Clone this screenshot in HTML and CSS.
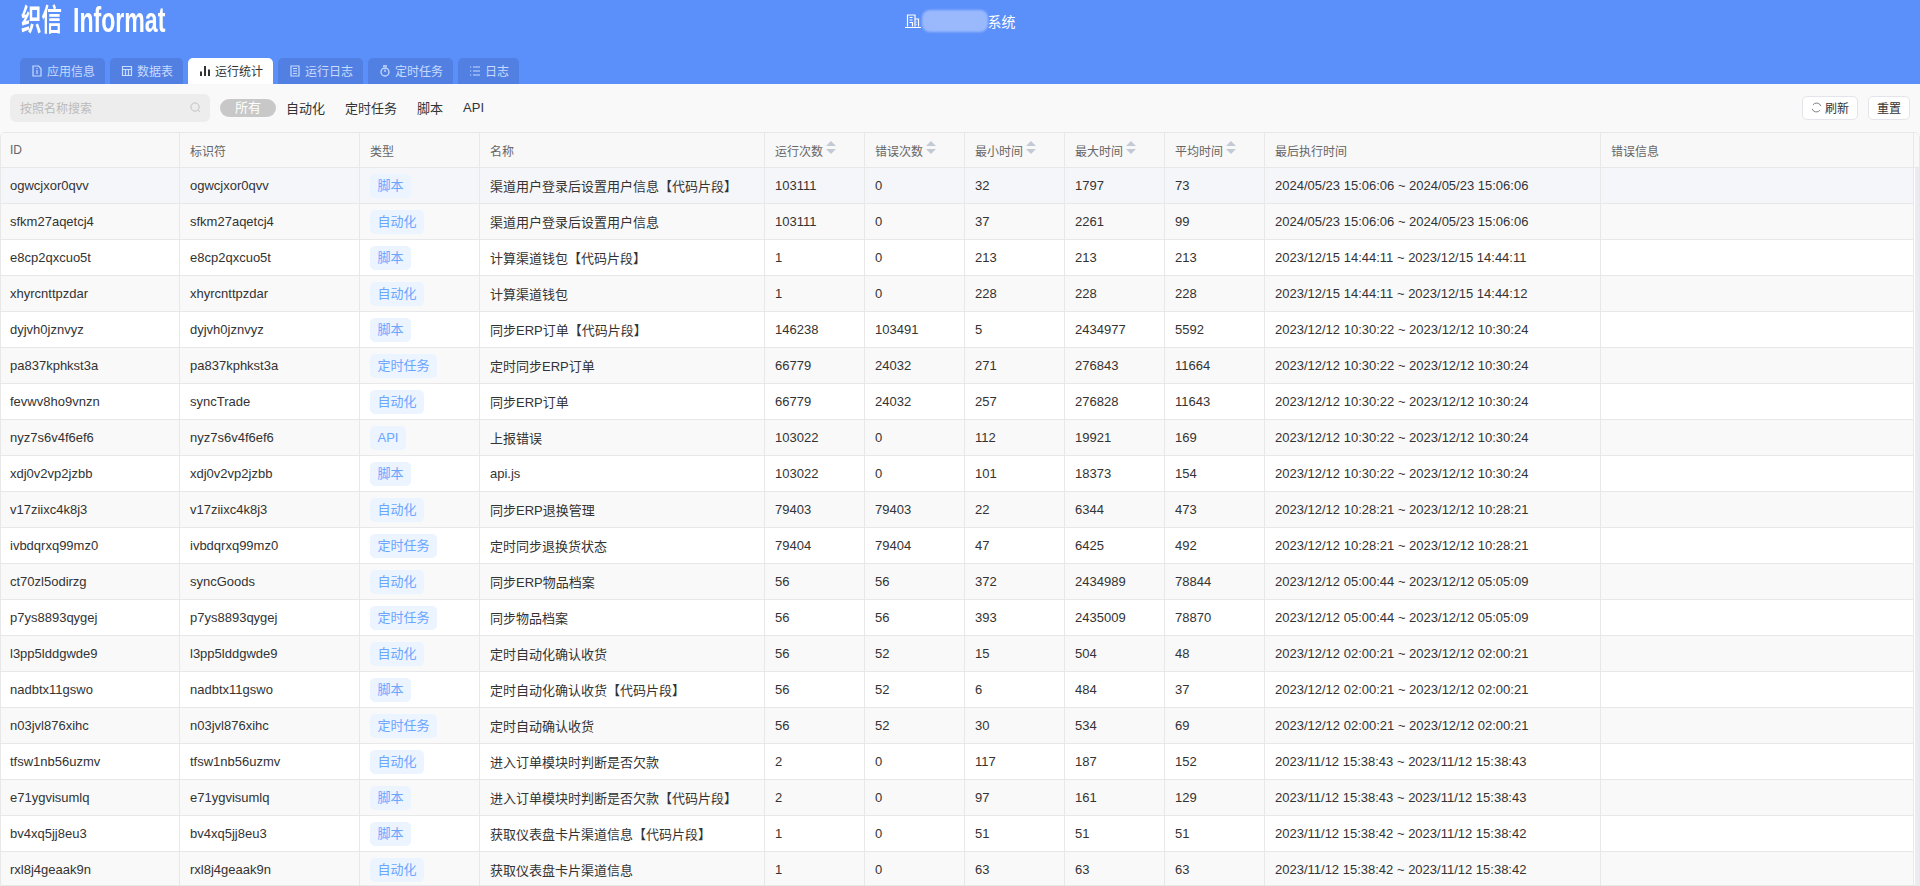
FILE: index.html
```html
<!DOCTYPE html>
<html lang="zh-CN">
<head>
<meta charset="utf-8">
<title>运行统计</title>
<link rel="stylesheet" href="styles.css">
</head>
<body>
<header class="app-header">
  <div class="top-row">
    <div class="logo"><span class="logo-cn">织信</span><span class="logo-en">Informat</span></div>
    <div class="title">
      <svg class="title-icon" viewBox="0 0 16 16" fill="none" stroke="#fff" stroke-width="1.2"><path d="M2.5 13.5V2h7.5v11.5M10 6h3.5v7.5M0 14.5h16M4.5 4.5h3M4.5 7h3M4.5 9.5h3v4M11.5 9h.5M11.5 11.5h.5"/></svg>
      <span class="blur"></span>
      <span>系统</span>
    </div>
    <div></div>
  </div>
  <nav class="tabs">
    <a class="tab"><svg class="tab-icon" viewBox="0 0 12 12" fill="none" stroke="currentColor" stroke-width="1.2"><path d="M2 1h5.5L10 3.5V11H2zM6 5v4M6 3v1"/></svg>应用信息</a>
    <a class="tab"><svg class="tab-icon" viewBox="0 0 12 12" fill="none" stroke="currentColor" stroke-width="1.2"><path d="M1.5 1.5h9v9h-9zM1.5 4.5h9M4.5 4.5v6M7.5 4.5v6"/></svg>数据表</a>
    <a class="tab active"><svg class="tab-icon" viewBox="0 0 12 12" fill="currentColor"><path d="M1 6.5h2V11H1zM5 1h2v10H5zM9 4.5h2V11H9z"/></svg>运行统计</a>
    <a class="tab"><svg class="tab-icon" viewBox="0 0 12 12" fill="none" stroke="currentColor" stroke-width="1.2"><path d="M2 1h8v10H2zM4 3.5h4M4 6h4M4 8.5h4"/></svg>运行日志</a>
    <a class="tab"><svg class="tab-icon" viewBox="0 0 12 12" fill="none" stroke="currentColor" stroke-width="1.3"><circle cx="6" cy="7" r="4"/><path d="M4 1h4M6 4.5V7"/></svg>定时任务</a>
    <a class="tab"><svg class="tab-icon" viewBox="0 0 12 12" fill="none" stroke="currentColor" stroke-width="1.2"><path d="M4 2h7M4 6h7M4 10h7M1 2h1.2M1 6h1.2M1 10h1.2"/></svg>日志</a>
  </nav>
</header>
<main class="main">
  <div class="toolbar">
    <div class="search">
      <span>按照名称搜索</span>
      <svg class="search-icon" viewBox="0 0 12 12" fill="none" stroke="#bdbdbd" stroke-width="1"><circle cx="5.5" cy="5.5" r="4.5"/><path d="M9 9l2 2"/></svg>
    </div>
    <div class="filters">
      <span class="pill">所有</span>
      <span>自动化</span>
      <span>定时任务</span>
      <span>脚本</span>
      <span>API</span>
    </div>
    <div class="actions">
      <button class="btn"><svg class="btn-icon" viewBox="0 0 12 12" fill="none" stroke="#777" stroke-width="1"><path d="M2 3.2A5 5 0 0 1 10.8 4.5M10 8.8A5 5 0 0 1 1.2 7.5"/></svg>刷新</button>
      <button class="btn">重置</button>
    </div>
  </div>
  <div class="table-box">
    <div class="thead">
      <div class="th c-id">ID</div>
      <div class="th c-id">标识符</div>
      <div class="th c-type">类型</div>
      <div class="th c-name">名称</div>
      <div class="th c-num">运行次数<span class="sort"><i class="up"></i><i class="down"></i></span></div>
      <div class="th c-num">错误次数<span class="sort"><i class="up"></i><i class="down"></i></span></div>
      <div class="th c-num">最小时间<span class="sort"><i class="up"></i><i class="down"></i></span></div>
      <div class="th c-num">最大时间<span class="sort"><i class="up"></i><i class="down"></i></span></div>
      <div class="th c-num">平均时间<span class="sort"><i class="up"></i><i class="down"></i></span></div>
      <div class="th c-time">最后执行时间</div>
      <div class="th c-err">错误信息</div>
      <div class="th-gutter"></div>
    </div>
    <div class="body-wrap">
      <div class="tbody">
        <div class="row hover"><div class="td c-id">ogwcjxor0qvv</div><div class="td c-id">ogwcjxor0qvv</div><div class="td c-type"><span class="tag">脚本</span></div><div class="td c-name">渠道用户登录后设置用户信息【代码片段】</div><div class="td c-num">103111</div><div class="td c-num">0</div><div class="td c-num">32</div><div class="td c-num">1797</div><div class="td c-num">73</div><div class="td c-time">2024/05/23 15:06:06 ~ 2024/05/23 15:06:06</div><div class="td c-err"></div></div>
        <div class="row"><div class="td c-id">sfkm27aqetcj4</div><div class="td c-id">sfkm27aqetcj4</div><div class="td c-type"><span class="tag">自动化</span></div><div class="td c-name">渠道用户登录后设置用户信息</div><div class="td c-num">103111</div><div class="td c-num">0</div><div class="td c-num">37</div><div class="td c-num">2261</div><div class="td c-num">99</div><div class="td c-time">2024/05/23 15:06:06 ~ 2024/05/23 15:06:06</div><div class="td c-err"></div></div>
        <div class="row"><div class="td c-id">e8cp2qxcuo5t</div><div class="td c-id">e8cp2qxcuo5t</div><div class="td c-type"><span class="tag">脚本</span></div><div class="td c-name">计算渠道钱包【代码片段】</div><div class="td c-num">1</div><div class="td c-num">0</div><div class="td c-num">213</div><div class="td c-num">213</div><div class="td c-num">213</div><div class="td c-time">2023/12/15 14:44:11 ~ 2023/12/15 14:44:11</div><div class="td c-err"></div></div>
        <div class="row"><div class="td c-id">xhyrcnttpzdar</div><div class="td c-id">xhyrcnttpzdar</div><div class="td c-type"><span class="tag">自动化</span></div><div class="td c-name">计算渠道钱包</div><div class="td c-num">1</div><div class="td c-num">0</div><div class="td c-num">228</div><div class="td c-num">228</div><div class="td c-num">228</div><div class="td c-time">2023/12/15 14:44:11 ~ 2023/12/15 14:44:12</div><div class="td c-err"></div></div>
        <div class="row"><div class="td c-id">dyjvh0jznvyz</div><div class="td c-id">dyjvh0jznvyz</div><div class="td c-type"><span class="tag">脚本</span></div><div class="td c-name">同步ERP订单【代码片段】</div><div class="td c-num">146238</div><div class="td c-num">103491</div><div class="td c-num">5</div><div class="td c-num">2434977</div><div class="td c-num">5592</div><div class="td c-time">2023/12/12 10:30:22 ~ 2023/12/12 10:30:24</div><div class="td c-err"></div></div>
        <div class="row"><div class="td c-id">pa837kphkst3a</div><div class="td c-id">pa837kphkst3a</div><div class="td c-type"><span class="tag">定时任务</span></div><div class="td c-name">定时同步ERP订单</div><div class="td c-num">66779</div><div class="td c-num">24032</div><div class="td c-num">271</div><div class="td c-num">276843</div><div class="td c-num">11664</div><div class="td c-time">2023/12/12 10:30:22 ~ 2023/12/12 10:30:24</div><div class="td c-err"></div></div>
        <div class="row"><div class="td c-id">fevwv8ho9vnzn</div><div class="td c-id">syncTrade</div><div class="td c-type"><span class="tag">自动化</span></div><div class="td c-name">同步ERP订单</div><div class="td c-num">66779</div><div class="td c-num">24032</div><div class="td c-num">257</div><div class="td c-num">276828</div><div class="td c-num">11643</div><div class="td c-time">2023/12/12 10:30:22 ~ 2023/12/12 10:30:24</div><div class="td c-err"></div></div>
        <div class="row"><div class="td c-id">nyz7s6v4f6ef6</div><div class="td c-id">nyz7s6v4f6ef6</div><div class="td c-type"><span class="tag">API</span></div><div class="td c-name">上报错误</div><div class="td c-num">103022</div><div class="td c-num">0</div><div class="td c-num">112</div><div class="td c-num">19921</div><div class="td c-num">169</div><div class="td c-time">2023/12/12 10:30:22 ~ 2023/12/12 10:30:24</div><div class="td c-err"></div></div>
        <div class="row"><div class="td c-id">xdj0v2vp2jzbb</div><div class="td c-id">xdj0v2vp2jzbb</div><div class="td c-type"><span class="tag">脚本</span></div><div class="td c-name">api.js</div><div class="td c-num">103022</div><div class="td c-num">0</div><div class="td c-num">101</div><div class="td c-num">18373</div><div class="td c-num">154</div><div class="td c-time">2023/12/12 10:30:22 ~ 2023/12/12 10:30:24</div><div class="td c-err"></div></div>
        <div class="row"><div class="td c-id">v17ziixc4k8j3</div><div class="td c-id">v17ziixc4k8j3</div><div class="td c-type"><span class="tag">自动化</span></div><div class="td c-name">同步ERP退换管理</div><div class="td c-num">79403</div><div class="td c-num">79403</div><div class="td c-num">22</div><div class="td c-num">6344</div><div class="td c-num">473</div><div class="td c-time">2023/12/12 10:28:21 ~ 2023/12/12 10:28:21</div><div class="td c-err"></div></div>
        <div class="row"><div class="td c-id">ivbdqrxq99mz0</div><div class="td c-id">ivbdqrxq99mz0</div><div class="td c-type"><span class="tag">定时任务</span></div><div class="td c-name">定时同步退换货状态</div><div class="td c-num">79404</div><div class="td c-num">79404</div><div class="td c-num">47</div><div class="td c-num">6425</div><div class="td c-num">492</div><div class="td c-time">2023/12/12 10:28:21 ~ 2023/12/12 10:28:21</div><div class="td c-err"></div></div>
        <div class="row"><div class="td c-id">ct70zl5odirzg</div><div class="td c-id">syncGoods</div><div class="td c-type"><span class="tag">自动化</span></div><div class="td c-name">同步ERP物品档案</div><div class="td c-num">56</div><div class="td c-num">56</div><div class="td c-num">372</div><div class="td c-num">2434989</div><div class="td c-num">78844</div><div class="td c-time">2023/12/12 05:00:44 ~ 2023/12/12 05:05:09</div><div class="td c-err"></div></div>
        <div class="row"><div class="td c-id">p7ys8893qygej</div><div class="td c-id">p7ys8893qygej</div><div class="td c-type"><span class="tag">定时任务</span></div><div class="td c-name">同步物品档案</div><div class="td c-num">56</div><div class="td c-num">56</div><div class="td c-num">393</div><div class="td c-num">2435009</div><div class="td c-num">78870</div><div class="td c-time">2023/12/12 05:00:44 ~ 2023/12/12 05:05:09</div><div class="td c-err"></div></div>
        <div class="row"><div class="td c-id">l3pp5lddgwde9</div><div class="td c-id">l3pp5lddgwde9</div><div class="td c-type"><span class="tag">自动化</span></div><div class="td c-name">定时自动化确认收货</div><div class="td c-num">56</div><div class="td c-num">52</div><div class="td c-num">15</div><div class="td c-num">504</div><div class="td c-num">48</div><div class="td c-time">2023/12/12 02:00:21 ~ 2023/12/12 02:00:21</div><div class="td c-err"></div></div>
        <div class="row"><div class="td c-id">nadbtx11gswo</div><div class="td c-id">nadbtx11gswo</div><div class="td c-type"><span class="tag">脚本</span></div><div class="td c-name">定时自动化确认收货【代码片段】</div><div class="td c-num">56</div><div class="td c-num">52</div><div class="td c-num">6</div><div class="td c-num">484</div><div class="td c-num">37</div><div class="td c-time">2023/12/12 02:00:21 ~ 2023/12/12 02:00:21</div><div class="td c-err"></div></div>
        <div class="row"><div class="td c-id">n03jvl876xihc</div><div class="td c-id">n03jvl876xihc</div><div class="td c-type"><span class="tag">定时任务</span></div><div class="td c-name">定时自动确认收货</div><div class="td c-num">56</div><div class="td c-num">52</div><div class="td c-num">30</div><div class="td c-num">534</div><div class="td c-num">69</div><div class="td c-time">2023/12/12 02:00:21 ~ 2023/12/12 02:00:21</div><div class="td c-err"></div></div>
        <div class="row"><div class="td c-id">tfsw1nb56uzmv</div><div class="td c-id">tfsw1nb56uzmv</div><div class="td c-type"><span class="tag">自动化</span></div><div class="td c-name">进入订单模块时判断是否欠款</div><div class="td c-num">2</div><div class="td c-num">0</div><div class="td c-num">117</div><div class="td c-num">187</div><div class="td c-num">152</div><div class="td c-time">2023/11/12 15:38:43 ~ 2023/11/12 15:38:43</div><div class="td c-err"></div></div>
        <div class="row"><div class="td c-id">e71ygvisumlq</div><div class="td c-id">e71ygvisumlq</div><div class="td c-type"><span class="tag">脚本</span></div><div class="td c-name">进入订单模块时判断是否欠款【代码片段】</div><div class="td c-num">2</div><div class="td c-num">0</div><div class="td c-num">97</div><div class="td c-num">161</div><div class="td c-num">129</div><div class="td c-time">2023/11/12 15:38:43 ~ 2023/11/12 15:38:43</div><div class="td c-err"></div></div>
        <div class="row"><div class="td c-id">bv4xq5jj8eu3</div><div class="td c-id">bv4xq5jj8eu3</div><div class="td c-type"><span class="tag">脚本</span></div><div class="td c-name">获取仪表盘卡片渠道信息【代码片段】</div><div class="td c-num">1</div><div class="td c-num">0</div><div class="td c-num">51</div><div class="td c-num">51</div><div class="td c-num">51</div><div class="td c-time">2023/11/12 15:38:42 ~ 2023/11/12 15:38:42</div><div class="td c-err"></div></div>
        <div class="row"><div class="td c-id">rxl8j4geaak9n</div><div class="td c-id">rxl8j4geaak9n</div><div class="td c-type"><span class="tag">自动化</span></div><div class="td c-name">获取仪表盘卡片渠道信息</div><div class="td c-num">1</div><div class="td c-num">0</div><div class="td c-num">63</div><div class="td c-num">63</div><div class="td c-num">63</div><div class="td c-time">2023/11/12 15:38:42 ~ 2023/11/12 15:38:42</div><div class="td c-err"></div></div>
      </div>
      <div class="scroll-strip"></div>
    </div>
  </div>
</main>
</body>
</html>
```

FILE: styles.css
```css
* { box-sizing: border-box; }
html, body { margin: 0; height: 100%; overflow: hidden; }
body {
  font-family: "Liberation Sans", "Noto Sans CJK SC", sans-serif;
  font-size: 13px;
  color: #333;
  background: #f9f9f9;
}

.app-header { height: 84px; background: #5b8ff9; display: flex; flex-direction: column; }
.top-row { height: 58px; display: grid; grid-template-columns: 1fr auto 1fr; }
.logo { display: flex; color: #fff; font-weight: 700; height: 40px; align-items: flex-start; padding-left: 21px; white-space: nowrap; }
.logo-cn {
  flex: none; font-size: 30px; line-height: 40px; width: 52px;
  transform: scaleX(.68); transform-origin: left center;
}
.logo-en {
  flex: none; font-size: 35px; line-height: 40px; transform: scaleX(.66); transform-origin: left center;
  font-family: "Liberation Sans", sans-serif;
}
.title { display: flex; align-items: center; height: 42px; color: #fff; font-size: 14px; }
.title-icon { width: 16px; height: 16px; }
.blur { width: 66px; height: 22px; background: #9ab9fd; border-radius: 8px; filter: blur(1px); margin-left: 1px; }

.tabs { display: flex; gap: 5px; padding-left: 20px; height: 26px; }
.tab {
  display: flex; align-items: center; padding: 0 10px 1px 11px; font-size: 12px;
  border-radius: 5px 5px 0 0; background: #5180e2; color: #c9daff;
}
.tab.active { background: #fff; color: #333; }
.tab-icon { width: 12px; height: 12px; margin-right: 4px; }

.main { display: flex; flex-direction: column; height: 802px; }
.toolbar { height: 48px; display: flex; align-items: center; padding: 0 10px; }
.search {
  width: 200px; height: 28px; border-radius: 6px; background: #ededed; color: #bbb;
  font-size: 12px; display: flex; align-items: center; justify-content: space-between;
  padding: 0 9px 1px 10px;
}
.search-icon { width: 11px; height: 11px; }
.filters { display: flex; align-items: center; gap: 20px; margin-left: 10px; padding-bottom: 1px; }
.pill {
  height: 18px; line-height: 17px; padding: 0 15px; border-radius: 9px;
  background: #c8c8c8; color: #fff; margin: 1px -10px 0 0;
}
.actions { margin-left: auto; display: flex; gap: 10px; }
.btn {
  height: 24px; padding: 0 8px 1px; border: 1px solid #e3e5ea; border-radius: 5px; background: #fff;
  font: inherit; font-size: 12px; color: #333; display: flex; align-items: center;
}
.btn-icon { width: 11px; height: 11px; margin-right: 3px; }

.table-box {
  height: 754px; border: 1px solid #e8e8e8; border-radius: 5px 5px 0 0; overflow: hidden;
  background: #fff; display: flex; flex-direction: column;
}
.thead { display: flex; height: 35px; background: #f8f8f8; border-bottom: 1px solid #e8e8e8; flex: none; }
.row { display: flex; height: 36px; border-bottom: 1px solid #e8e8e8; }
.row:nth-child(even) { background: #f9f9f9; }
.row.hover { background: #f5f6fa; }
.body-wrap { display: flex; flex: 1; min-height: 0; }
.tbody { width: 1913px; overflow: hidden; flex: none; }
.scroll-strip { flex: 1; background: #ebebf0; margin-left: 1px; }

.th, .td {
  flex: none; display: flex; align-items: center; padding: 0 10px; border-right: 1px solid #e8e8e8;
  white-space: nowrap; overflow: hidden;
}
.th { font-size: 12px; color: #666; }
.td { color: #333; }
.th-gutter { flex: 1; }
.c-id { width: 180px; }
.c-id:first-child { width: 179px; padding-left: 9px; }
.c-type { width: 120px; }
.c-name { width: 285px; }
.c-num { width: 100px; }
.c-time { width: 336px; }
.c-err { width: 313px; }

.sort { display: flex; flex-direction: column; gap: 3px; margin-left: 3px; margin-top: -6px; }
.sort i { display: block; width: 0; height: 0; border-left: 5px solid transparent; border-right: 5px solid transparent; }
.sort .up { border-bottom: 5px solid #c4c9d6; }
.sort .down { border-top: 5px solid #c4c9d6; }

.tag {
  height: 24px; line-height: 24px; padding: 0 7.5px; border-radius: 5px;
  background: #ecf4ff; color: #6aa5ff;
}
```
